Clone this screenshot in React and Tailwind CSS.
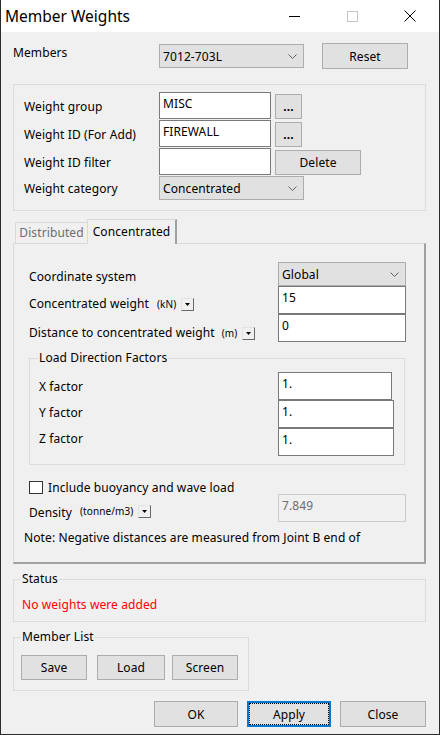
import React from "react";

function Chevron() {
  return (
    <svg width="9" height="5" viewBox="0 0 9 5" className="shrink-0">
      <polyline points="0.5,0.5 4.5,4.5 8.5,0.5" fill="none" stroke="#606060" strokeWidth="1" />
    </svg>
  );
}

function Select({ value, className }) {
  return (
    <div className={"flex items-center justify-between border border-[#adadad] bg-[#e1e1e1] pl-[3px] pr-[6px] pt-px " + className}>
      <span>{value}</span>
      <Chevron />
    </div>
  );
}

function Input({ value, className }) {
  return (
    <div className={"border border-[#7a7a7a] bg-white pl-[3px] pt-[3px] " + className}>{value}</div>
  );
}

function Btn({ children, className }) {
  return (
    <div className={"flex items-center justify-center border border-[#adadad] bg-[#e1e1e1] pt-px " + className}>{children}</div>
  );
}

function UnitBtn() {
  return (
    <div className="w-[13px] h-[13px] flex items-center justify-center bg-[#f0f0f0] border border-t-[#e3e3e3] border-l-[#e3e3e3] border-r-[#696969] border-b-[#696969] shrink-0">
      <svg width="5" height="3" viewBox="0 0 5 3">
        <polygon points="0,0 5,0 2.5,3" fill="#000" />
      </svg>
    </div>
  );
}

export default function App() {
  return (
    <div className="w-[440px] h-[735px] bg-[#f0f0f0] border-x border-b border-[#2b2b2b] flex flex-col font-['Noto_Sans',sans-serif] text-[12px] leading-4 text-black">
      {/* Title bar */}
      <div className="h-[32px] bg-white flex items-center shrink-0">
        <div className="pl-[4px] text-[15.5px] leading-5 text-black">Member Weights</div>
        <div className="ml-auto flex h-full">
          <div className="w-[58px] h-full flex items-center justify-center">
            <div className="w-[11px] h-px bg-black" />
          </div>
          <div className="w-[58px] h-full flex items-center justify-center">
            <div className="w-[11px] h-[11px] border border-[#c6c6c6]" />
          </div>
          <div className="w-[58px] h-full flex items-center justify-center">
            <svg width="12" height="12" viewBox="0 0 12 12">
              <line x1="0.5" y1="0.5" x2="11.5" y2="11.5" stroke="#000" strokeWidth="1" />
              <line x1="11.5" y1="0.5" x2="0.5" y2="11.5" stroke="#000" strokeWidth="1" />
            </svg>
          </div>
        </div>
      </div>

      {/* Body */}
      <div className="flex-1 pl-[12px] pr-[13px] flex flex-col tracking-[0.1px]">
        {/* Members row */}
        <div className="mt-[11px] flex items-start h-[26px]">
          <div className="w-[146px] mt-[2px]">Members</div>
          <Select value="7012-703L" className="mt-px w-[145px] h-[24px]" />
          <Btn className="ml-[18px] w-[86px] h-[26px]">Reset</Btn>
        </div>

        {/* Weight group box */}
        <div className="mt-[15px] border border-[#dcdcdc] h-[127px] pt-[7px] pl-[10px]">
          <div className="flex h-[28px]">
            <div className="w-[135px] mt-[7px]">Weight group</div>
            <Input value="MISC" className="w-[112px] h-[27px]" />
            <Btn className="ml-[4px] mt-[2px] w-[27px] h-[25px] font-bold">...</Btn>
          </div>
          <div className="flex h-[28px]">
            <div className="w-[135px] mt-[7px]">Weight ID (For Add)</div>
            <Input value="FIREWALL" className="w-[112px] h-[27px]" />
            <Btn className="ml-[4px] mt-[2px] w-[27px] h-[25px] font-bold">...</Btn>
          </div>
          <div className="flex h-[28px]">
            <div className="w-[135px] mt-[7px]">Weight ID filter</div>
            <Input value="" className="w-[112px] h-[27px]" />
            <Btn className="ml-[4px] mt-[2px] w-[86px] h-[25px]">Delete</Btn>
          </div>
          <div className="flex h-[24px]">
            <div className="w-[135px] mt-[5px]">Weight category</div>
            <Select value="Concentrated" className="w-[145px] h-[24px]" />
          </div>
        </div>

        {/* Tabs */}
        <div className="mt-[8px] h-[24px] flex items-end pl-[2px]">
          <div className="w-[72px] h-[21px] border-t border-l border-[#dadada] text-[#6d6d6d] flex items-center justify-center">
            Distributed
          </div>
          <div className="relative z-10 -mb-px w-[90px] h-[25px] bg-[#f0f0f0] border-t border-l border-[#dadada] border-r-2 border-r-[#a0a0a0] flex items-center justify-center">
            Concentrated
          </div>
        </div>
        <div className="h-[321px] border-t border-l border-[#dadada] border-r-2 border-b-2 border-r-[#a0a0a0] border-b-[#a0a0a0] pt-[18px] pl-[15px]">
          <div className="flex h-[24px]">
            <div className="w-[249px] mt-[7px]">Coordinate system</div>
            <Select value="Global" className="w-[128px] h-[24px]" />
          </div>
          <div className="flex h-[28px]">
            <div className="w-[249px] mt-[10px] h-[16px] flex items-center">
              <span>Concentrated weight</span>
              <span className="ml-[8px] text-[10px]">(kN)</span>
              <span className="ml-[5px]"><UnitBtn /></span>
            </div>
            <Input value="15" className="w-[128px] h-[28px]" />
          </div>
          <div className="flex h-[28px]">
            <div className="w-[249px] mt-[11px] h-[16px] flex items-center">
              <span>Distance to concentrated weight</span>
              <span className="ml-[7px] text-[10px]">(m)</span>
              <span className="ml-[5px]"><UnitBtn /></span>
            </div>
            <Input value="0" className="w-[128px] h-[28px]" />
          </div>

          <fieldset className="mt-[8px] w-[376px] border border-[#dcdcdc] pl-[8px] pt-[6px] pb-[8px]">
            <legend className="px-px">Load Direction Factors</legend>
            <div className="flex h-[28px]">
              <div className="ml-px w-[239px] mt-[7px]">X factor</div>
              <Input value="1." className="w-[114px] h-[28px]" />
            </div>
            <div className="flex h-[28px]">
              <div className="ml-px w-[239px] mt-[5px]">Y factor</div>
              <Input value="1." className="w-[116px] h-[28px]" />
            </div>
            <div className="flex h-[28px]">
              <div className="ml-px w-[239px] mt-[3px]">Z factor</div>
              <Input value="1." className="w-[116px] h-[28px]" />
            </div>
          </fieldset>

          <div className="mt-[16px] flex items-center h-[13px]">
            <div className="w-[14px] h-[13px] border border-[#333333] bg-white" />
            <span className="ml-[5px]">Include buoyancy and wave load</span>
          </div>
          <div className="flex h-[28px]">
            <div className="w-[249px] mt-[11px] h-[16px] flex items-center">
              <span>Density</span>
              <span className="ml-[8px] text-[10px] -mt-[5px]">(tonne/m3)</span>
              <span className="ml-[5px] -mt-[3px]"><UnitBtn /></span>
            </div>
            <div className="w-[128px] h-[28px] border border-[#cccccc] bg-[#f0f0f0] text-[#6d6d6d] pl-[3px] pt-[3px]">7.849</div>
          </div>
          <div className="mt-[8px] -ml-[5px]">Note: Negative distances are measured from Joint B end of</div>
        </div>

        {/* Status */}
        <fieldset className="mt-[7px] border border-[#dcdcdc] pl-[7px] pt-[10px] pb-[8px]">
          <legend className="px-px">Status</legend>
          <div className="ml-px text-[#ff0000]">No weights were added</div>
        </fieldset>

        {/* Member List */}
        <fieldset className="mt-[7px] w-[236px] border border-[#dcdcdc] pl-[7px] pt-[10px] pb-[10px]">
          <legend className="px-px">Member List</legend>
          <div className="flex">
            <Btn className="w-[66px] h-[25px]">Save</Btn>
            <Btn className="ml-[10px] w-[68px] h-[25px]">Load</Btn>
            <Btn className="ml-[7px] w-[66px] h-[25px]">Screen</Btn>
          </div>
        </fieldset>

        {/* Bottom buttons */}
        <div className="mt-[10px] flex justify-end">
          <Btn className="w-[84px] h-[26px]">OK</Btn>
          <div className="ml-[9px] w-[84px] h-[26px] flex items-center justify-center pt-px border-2 border-[#0078d7] bg-[#e1e1e1] outline-1 outline-dotted outline-black -outline-offset-3">
            Apply
          </div>
          <Btn className="ml-[9px] w-[86px] h-[26px]">Close</Btn>
        </div>
      </div>
    </div>
  );
}
